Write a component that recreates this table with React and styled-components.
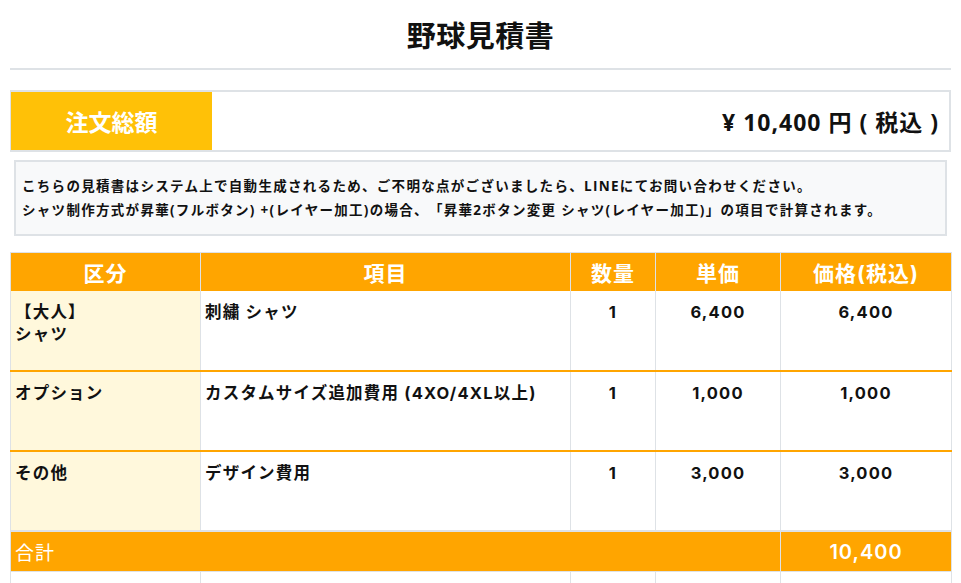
import React from 'react';
import styled, { createGlobalStyle } from 'styled-components';

const GlobalStyle = createGlobalStyle`
  body {
    margin: 0;
    background: #fff;
    color: #111;
    font-family: "Open Sans", "Noto Sans CJK JP", sans-serif;
    text-spacing-trim: space-all;
  }
`;

const Page = styled.div`
  padding: 0 10px;
`;

const Title = styled.h1`
  margin: 0;
  padding: 16px 0 12px;
  text-align: center;
  font-size: 29px;
  font-weight: 700;
  line-height: 40px;
  letter-spacing: 0.5px;
  border-bottom: 2px solid #dee2e6;
`;

const TotalBox = styled.div`
  display: flex;
  margin-top: 20px;
  height: 58px;
  border: 2px solid #dee2e6;
  border-left-width: 1px;
`;

const TotalLabel = styled.div`
  width: 201px;
  display: flex;
  align-items: center;
  justify-content: center;
  background: #ffc107;
  color: #fff;
  font-size: 23px;
  font-weight: 700;
`;

const TotalValue = styled.div`
  flex: 1;
  display: flex;
  align-items: center;
  justify-content: flex-end;
  padding-right: 10px;
  font-size: 23px;
  font-weight: 700;
  letter-spacing: 1px;
  white-space: pre;
`;

const Notice = styled.div`
  margin: 8px 4px 0;
  padding: 12px 6px 12px;
  background: #f8f9fa;
  border: 2px solid #dee2e6;
  font-size: 13.5px;
  font-weight: 700;
  line-height: 24px;
  letter-spacing: 1.3px;
`;

const Table = styled.table`
  margin-top: 16px;
  width: 941px;
  border-collapse: collapse;
  table-layout: fixed;
  font-family: Inter, "Noto Sans CJK JP", sans-serif;
  letter-spacing: 1px;
`;

const Th = styled.th`
  height: 38px;
  padding: 0;
  background: #ffa500;
  color: #fff;
  font-size: 21px;
  font-weight: 700;
  border: 1px solid #dee2e6;
  border-bottom: none;
`;

const Td = styled.td`
  height: 80px;
  padding: 10px 4px 0;
  box-sizing: border-box;
  vertical-align: top;
  font-size: 16.5px;
  font-weight: 700;
  line-height: 22px;
  letter-spacing: 1.2px;
  text-align: ${(p) => (p.$center ? 'center' : 'left')};
  background: ${(p) => (p.$kind ? '#fff8dc' : '#fff')};
  border-left: 1px solid #dee2e6;
  border-right: 1px solid #dee2e6;
  border-bottom: 2px solid ${(p) => (p.$last ? '#dee2e6' : '#ffa500')};
`;

const SumCell = styled.td`
  height: 39px;
  padding: 0 4px;
  background: #ffa500;
  color: #fff;
  font-size: ${(p) => (p.$bold ? '20px' : '19px')};
  font-weight: ${(p) => (p.$bold ? 600 : 400)};
  text-align: ${(p) => (p.$center ? 'center' : 'left')};
  border: 1px solid #dee2e6;
`;

const EmptyCell = styled.td`
  height: 40px;
  border: 1px solid #dee2e6;
`;

const rows = [
  { kind: ['【大人】', 'シャツ'], item: '刺繍 シャツ', qty: 1, unit: '6,400', price: '6,400' },
  { kind: ['オプション'], item: 'カスタムサイズ追加費用 (4XO/4XL以上)', qty: 1, unit: '1,000', price: '1,000' },
  { kind: ['その他'], item: 'デザイン費用', qty: 1, unit: '3,000', price: '3,000' },
];

export default function App() {
  return (
    <Page>
      <GlobalStyle />
      <Title>野球見積書</Title>

      <TotalBox>
        <TotalLabel>注文総額</TotalLabel>
        <TotalValue>¥ 10,400 円 ( 税込 )</TotalValue>
      </TotalBox>

      <Notice>
        こちらの見積書はシステム上で自動生成されるため、ご不明な点がございましたら、LINEにてお問い合わせください。
        <br />
        シャツ制作方式が昇華(フルボタン) +(レイヤー加工)の場合、「昇華2ボタン変更 シャツ(レイヤー加工)」の項目で計算されます。
      </Notice>

      <Table>
        <colgroup>
          <col style={{ width: 190 }} />
          <col style={{ width: 370 }} />
          <col style={{ width: 85 }} />
          <col style={{ width: 125 }} />
          <col style={{ width: 171 }} />
        </colgroup>
        <thead>
          <tr>
            <Th>区分</Th>
            <Th>項目</Th>
            <Th>数量</Th>
            <Th>単価</Th>
            <Th>価格(税込)</Th>
          </tr>
        </thead>
        <tbody>
          {rows.map((r, i) => (
            <tr key={i}>
              <Td $kind $last={i === rows.length - 1}>
                {r.kind.map((k, j) => (
                  <div key={j}>{k}</div>
                ))}
              </Td>
              <Td $last={i === rows.length - 1}>{r.item}</Td>
              <Td $center $last={i === rows.length - 1}>{r.qty}</Td>
              <Td $center $last={i === rows.length - 1}>{r.unit}</Td>
              <Td $center $last={i === rows.length - 1}>{r.price}</Td>
            </tr>
          ))}
          <tr>
            <SumCell colSpan={4}>合計</SumCell>
            <SumCell $center $bold>10,400</SumCell>
          </tr>
          <tr>
            <EmptyCell />
            <EmptyCell />
            <EmptyCell />
            <EmptyCell />
            <EmptyCell />
          </tr>
        </tbody>
      </Table>
    </Page>
  );
}
